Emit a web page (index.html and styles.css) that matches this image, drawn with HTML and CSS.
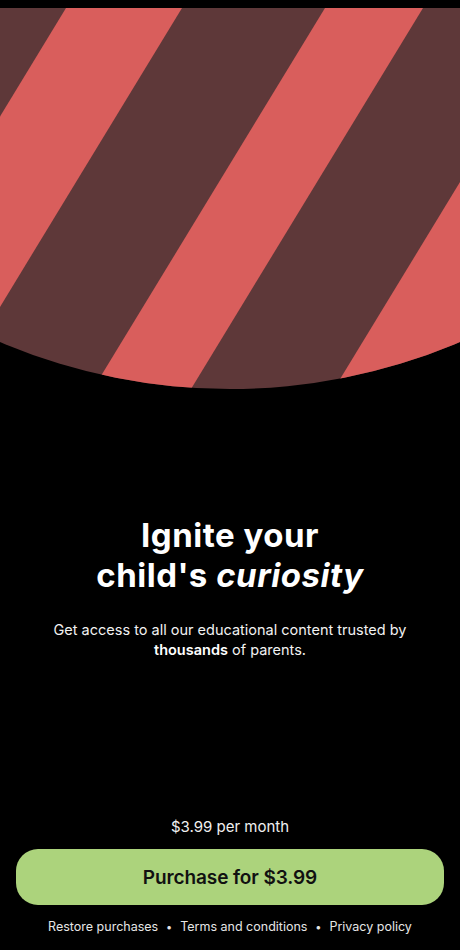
FILE: index.html
```html
<!DOCTYPE html>
<html lang="en">
<head>
<meta charset="utf-8">
<title>Paywall</title>
<link rel="stylesheet" href="styles.css">
</head>
<body>
<div class="screen">
  <div class="status"></div>
  <svg class="hero" width="460" height="381" viewBox="0 0 460 381" xmlns="http://www.w3.org/2000/svg">
    <defs>
      <clipPath id="arc">
        <circle cx="230" cy="-205" r="586"/>
      </clipPath>
    </defs>
    <g clip-path="url(#arc)">
      <rect x="0" y="0" width="460" height="381" fill="#5e3839"/>
      <polygon points="66,0 182,0 -50,381 -166,381" fill="#d95e5c"/>
      <polygon points="325,0 423,0 191,381 93,381" fill="#d95e5c"/>
      <polygon points="566,0 690,0 458,381 334,381" fill="#d95e5c"/>
    </g>
  </svg>
  <main class="content">
    <h1 class="title">Ignite your<br>child's <em>curiosity</em></h1>
    <p class="subtitle">Get access to all our educational content trusted by <strong>thousands</strong> of parents.</p>
  </main>
  <section class="purchase">
    <p class="price">$3.99 per month</p>
    <button class="buy">Purchase for $3.99</button>
    <nav class="links">
      <span>Restore purchases</span>
      <span class="dot">•</span>
      <span>Terms and conditions</span>
      <span class="dot">•</span>
      <span>Privacy policy</span>
    </nav>
  </section>
</div>
</body>
</html>
```

FILE: styles.css
```css
* {
  box-sizing: border-box;
}

html, body {
  margin: 0;
  padding: 0;
  background: #000;
}

body {
  font-family: Inter, "Noto Sans", "Liberation Sans", sans-serif;
  color: #fff;
}

.screen {
  width: 460px;
  height: 950px;
  display: flex;
  flex-direction: column;
  background: #000;
  overflow: hidden;
}

.status {
  height: 8px;
  background: #000;
}

.hero {
  display: block;
  flex: none;
}

.content {
  margin-top: 126px;
  text-align: center;
}

.title {
  margin: 0;
  font-size: 33px;
  line-height: 40px;
  font-weight: 700;
  letter-spacing: 0.5px;
}

.title em {
  font-style: italic;
}

.subtitle {
  margin: 25px 40px 0;
  font-size: 14.5px;
  line-height: 20px;
  font-weight: 400;
  color: #f2f2f2;
}

.subtitle strong {
  font-weight: 600;
  color: #fff;
}

.purchase {
  margin-top: auto;
  padding: 0 16px 14px;
  display: flex;
  flex-direction: column;
  align-items: stretch;
  text-align: center;
}

.price {
  margin: 0;
  font-size: 15px;
  line-height: 20px;
  color: #f0f0f0;
}

.buy {
  margin-top: 12px;
  height: 56px;
  border: none;
  border-radius: 22px;
  background: #acd37c;
  color: #111;
  font-family: inherit;
  font-size: 19px;
  font-weight: 600;
  letter-spacing: -0.1px;
}

.links {
  margin-top: 13px;
  display: flex;
  justify-content: center;
  font-size: 12.5px;
  line-height: 18px;
  color: #e6e6e6;
}

.dot {
  display: inline-block;
  width: 22px;
  text-align: center;
  font-size: 11px;
}
```
